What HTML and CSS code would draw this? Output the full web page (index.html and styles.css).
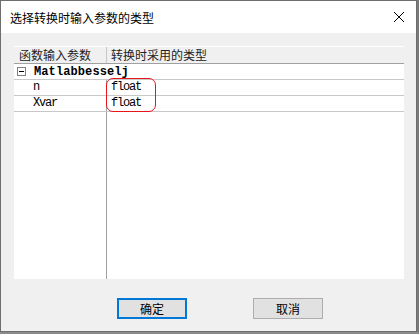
FILE: index.html
```html
<!DOCTYPE html>
<html lang="zh-CN">
  <head>
    <meta charset="UTF-8" />
    <meta name="viewport" content="width=device-width, initial-scale=1.0" />
    <title>选择转换时输入参数的类型</title>
    <link rel="stylesheet" href="styles.css">
  </head>
  <body>
    <div class="window">
      <div class="titlebar">
        <span class="title">选择转换时输入参数的类型</span>
        <svg class="close" width="12" height="12" viewBox="0 0 12 12">
          <path d="M1 1 L11 11 M11 1 L1 11" stroke="#000" stroke-width="1" fill="none" />
        </svg>
      </div>
      <div class="content">
        <div class="grid">
          <div class="head">
            <div class="c1">函数输入参数</div>
            <div class="c2">转换时采用的类型</div>
          </div>
          <div class="group">
            <span class="toggle"></span>
            <span class="mono bold">Matlabbesselj</span>
          </div>
          <div class="row">
            <div class="c1 mono">n</div>
            <div class="c2 mono">float</div>
          </div>
          <div class="row">
            <div class="c1 mono">Xvar</div>
            <div class="c2 mono">float</div>
          </div>
          <div class="fill">
            <div class="c1"></div>
          </div>
          <!-- red annotation round the type cells -->
          <div class="mark"></div>
        </div>
        <div class="buttons">
          <button type="button" class="btn default">确定</button>
          <button type="button" class="btn">取消</button>
        </div>
      </div>
    </div>
    <div class="desk"></div>
  </body>
</html>
```

FILE: styles.css
```css
* {
  margin: 0;
  padding: 0;
  box-sizing: border-box;
}
body {
  font-family: "Noto Sans CJK SC", "Noto Sans", sans-serif;
  font-size: 12px;
  background-color: #7a7a7a;
  width: 419px;
  height: 334px;
  overflow: hidden;
}
.window {
  width: 417px;
  height: 332px;
  border: 1px solid #6e6e6e;
  background-color: #f0f0f0;
  display: flex;
  flex-direction: column;
}
.titlebar {
  height: 32px;
  background-color: #fff;
  display: flex;
  align-items: center;
  justify-content: space-between;
  padding: 0 11px 0 9px;
}
.title {
  font-size: 12px;
  color: #000;
  line-height: 16px;
  margin-top: 2px;
}
.close {
  display: block;
}
.content {
  flex: 1;
  padding: 13px 0 0 13px;
}
.grid {
  position: relative;
  width: 390px;
  height: 233px;
  background-color: #fff;
  display: flex;
  flex-direction: column;
}
.head {
  display: flex;
  height: 18px;
  background-color: #f0f0f0;
  border-top: 1px solid #fff;
  border-bottom: 1px solid #a0a0a0;
  line-height: 16px;
  color: #222;
}
.c1 {
  width: 93px;
  padding-left: 5px;
  border-right: 1px solid #a0a0a0;
}
.c2 {
  padding-left: 4px;
}
.head .c1 {
  border-right-color: #c8c8c8;
}
.group,
.row {
  display: flex;
  align-items: center;
  height: 16px;
  border-bottom: 1px solid #c8c8c8;
}
.row .c1 {
  padding-left: 19px;
  height: 15px;
  line-height: 15px;
}
.row .c2 {
  line-height: 15px;
}
.mono {
  font-family: "Liberation Mono", "DejaVu Sans Mono", monospace;
  font-size: 12px;
  letter-spacing: -1.2px;
  color: #000;
}
.bold {
  font-weight: bold;
  letter-spacing: 0.1px;
}
.toggle {
  position: relative;
  width: 9px;
  height: 9px;
  border: 1px solid #808080;
  margin: 0 8px 0 3px;
}
.toggle::after {
  content: "";
  position: absolute;
  left: 1px;
  top: 3px;
  width: 5px;
  height: 1px;
  background-color: #000;
}
.fill {
  flex: 1;
  display: flex;
}
.fill .c1 {
  height: 100%;
}
.mark {
  position: absolute;
  left: 92px;
  top: 32px;
  width: 50px;
  height: 34px;
  border: 1.5px solid #e8141c;
  border-radius: 7px;
}
.buttons {
  display: flex;
  gap: 66px;
  padding-left: 103px;
  margin-top: 19px;
}
.btn {
  width: 70px;
  height: 21px;
  font-family: "Noto Sans CJK SC", "Noto Sans", sans-serif;
  font-size: 12px;
  color: #000;
  background-color: #e1e1e1;
  border: 1px solid #adadad;
  cursor: pointer;
}
.btn.default {
  border: 2px solid #0078d7;
}
.desk {
  height: 2px;
  background-color: #8a8a8a;
}
```
